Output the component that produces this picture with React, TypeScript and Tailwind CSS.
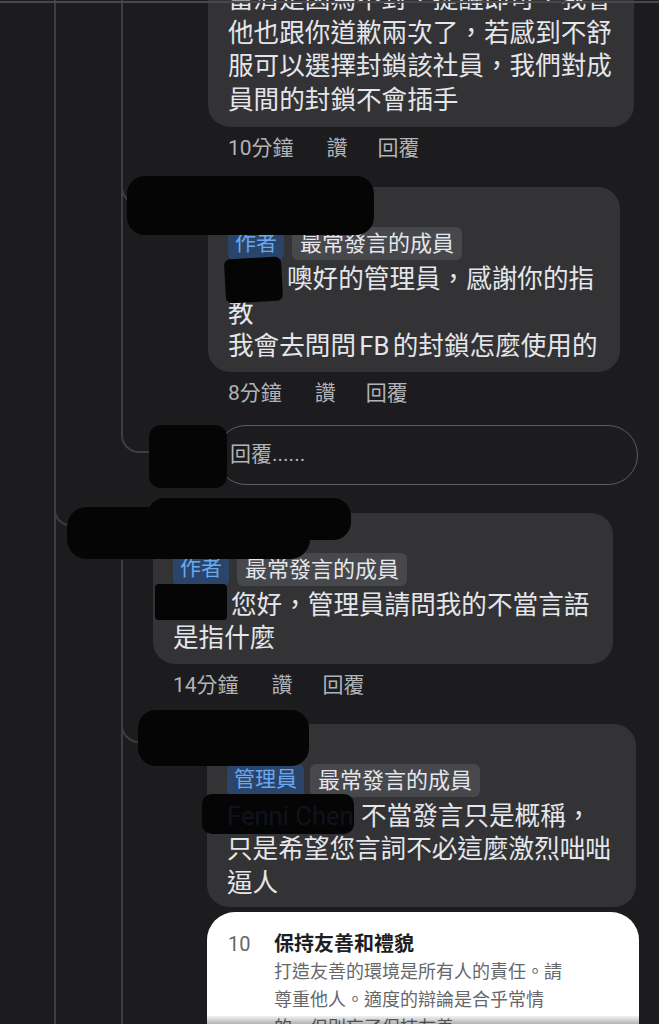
import React from 'react';

const line = 'absolute w-[2px] bg-[#3d3e41]';
const curve = 'absolute border-b-2 border-l-2 border-[#3d3e41]';
const blob = 'absolute bg-[#050505]';

const Meta = ({ time, className }: { time: string; className: string }) => (
    <div className={`flex h-[24px] items-center gap-[30px] text-[21px] leading-[24px] text-[#b0b3b8] ${className}`}>
        <span className="pr-[3px]">{time}</span>
        <span>讚</span>
        <span>回覆</span>
    </div>
);

const Badges = ({ role, gap }: { role: string; gap: string }) => (
    <div className={`flex h-[33px] items-stretch ${gap}`}>
        <span className="flex items-center rounded-[6px] bg-[#2a4569] px-[7px] text-[21px] text-[#6aa8f0]">{role}</span>
        <span className="flex items-center rounded-[6px] bg-[#47484b] px-[8px] text-[22px] text-[#e4e6eb]">最常發言的成員</span>
    </div>
);

export default function App() {
    return (
        <div className="relative h-[1024px] w-[659px] overflow-hidden bg-[#1c1c1e] font-[Roboto,'Noto_Sans_CJK_TC',sans-serif] text-[#e4e6eb]">
            {/* thread lines */}
            <div className={`${line} left-[54px] top-0 h-full`} />
            <div className={`${curve} left-[54px] top-[488px] h-[38px] w-[20px] rounded-bl-[16px]`} />
            <div className={`${line} left-[121px] top-0 h-[420px]`} />
            <div className={`${curve} left-[121px] top-[165px] h-[40px] w-[22px] rounded-bl-[18px]`} />
            <div className={`${curve} left-[121px] top-[410px] h-[43px] w-[30px] rounded-bl-[18px]`} />
            <div className={`${line} left-[121px] top-[560px] bottom-0`} />
            <div className={`${curve} left-[121px] top-[705px] h-[38px] w-[26px] rounded-bl-[18px]`} />

            <div className="absolute left-0 top-[1px] h-[2px] w-full bg-[#48484a]" />

            <div className="flex flex-col">
                {/* comment 1 */}
                <div className="ml-[208px] mt-[-29px] w-[426px] rounded-[22px] bg-[#333335] px-5 pb-[10px] pt-[12px] text-[25.6px] leading-[33.5px]">
                    <div className="whitespace-nowrap">當清是因為不對，提醒即可，我會</div>
                    <div className="whitespace-nowrap">他也跟你道歉兩次了，若感到不舒</div>
                    <div className="whitespace-nowrap">服可以選擇封鎖該社員，我們對成</div>
                    <div className="whitespace-nowrap">員間的封鎖不會插手</div>
                </div>
                <Meta time="10分鐘" className="ml-[228px] mt-[9px]" />

                {/* comment 2 */}
                <div className="relative mt-[27px]">
                    <div className="ml-[208px] w-[412px] rounded-[22px] bg-[#333335] px-5 pb-[8px] pt-[12px]">
                        <div className="h-[28px] text-[22px] font-semibold leading-[28px]">Fenni Chen</div>
                        <Badges role="作者" gap="gap-[8px]" />
                        <div className="mt-[3px] text-[25.6px] leading-[33.5px]">
                            <div className="whitespace-nowrap">
                                <span className="relative inline-block h-[33.5px] w-[59px] align-top">
                                    <span className={`${blob} -left-[3px] -top-[5px] h-[44px] w-[57px] -rotate-3 rounded-[6px]`} />
                                </span>
                                噢好的管理員，感謝你的指
                            </div>
                            <div>教</div>
                            <div className="whitespace-nowrap [word-spacing:-3px]">我會去問問 FB 的封鎖怎麼使用的</div>
                        </div>
                    </div>
                    <div className={`${blob} left-[127px] -top-[11px] h-[59px] w-[247px] rounded-[18px]`} />
                </div>
                <Meta time="8分鐘" className="ml-[228px] mt-[9px]" />

                {/* reply box */}
                <div className="relative mt-[20px]">
                    <div className="ml-[216px] flex h-[60px] w-[422px] items-center rounded-full border-[1.5px] border-[#5c5d60] pl-[13px] text-[21px] text-[#b0b3b8]">
                        回覆......
                    </div>
                    <div className={`${blob} left-[149px] top-0 h-[63px] w-[78px] rounded-[12px]`} />
                </div>

                {/* comment 3 */}
                <div className="relative mt-[28px]">
                    <div className="ml-[153px] w-[460px] rounded-[22px] bg-[#333335] px-5 pb-[8px] pt-[12px]">
                        <div className="h-[28px] text-[22px] font-semibold leading-[28px]">Fenni Chen</div>
                        <Badges role="作者" gap="gap-[8px]" />
                        <div className="mt-[3px] text-[25.6px] leading-[33.5px]">
                            <div className="whitespace-nowrap">
                                <span className="relative inline-block h-[33.5px] w-[58px] align-top">
                                    <span className={`${blob} -left-[18px] -top-[5px] h-[36px] w-[72px] rounded-[4px]`} />
                                </span>
                                您好，管理員請問我的不當言語
                            </div>
                            <div>是指什麼</div>
                        </div>
                    </div>
                    <div className={`${blob} left-[147px] -top-[15px] h-[42px] w-[204px] rounded-[18px]`} />
                    <div className={`${blob} left-[67px] -top-[6px] h-[52px] w-[243px] rounded-[20px]`} />
                </div>
                <Meta time="14分鐘" className="ml-[173px] mt-[9px]" />

                {/* comment 4 */}
                <div className="relative mt-[27px]">
                    <div className="ml-[207px] w-[429px] rounded-[22px] bg-[#333335] px-5 pb-[7px] pt-[12px]">
                        <div className="h-[28px] text-[22px] font-semibold leading-[28px]">管理員</div>
                        <Badges role="管理員" gap="gap-[6px]" />
                        <div className="mt-[3px] text-[25.6px] leading-[33.5px]">
                            <div className="whitespace-nowrap">
                                <span className="relative inline-block h-[33.5px] w-[134px] align-top">
                                    <span className={`${blob} -left-[25px] -top-[6px] h-[40px] w-[152px] rounded-[10px]`} />
                                    <span className="relative text-[#0f131c]">Fenni Chen</span>
                                </span>
                                不當發言只是概稱，
                            </div>
                            <div className="whitespace-nowrap">只是希望您言詞不必這麼激烈咄咄</div>
                            <div>逼人</div>
                        </div>
                    </div>
                    <div className={`${blob} left-[138px] -top-[14px] h-[56px] w-[171px] rounded-[18px]`} />
                </div>

                {/* rules sheet */}
                <div className="ml-[207px] mt-[5px] flex h-[200px] w-[432px] rounded-t-[28px] bg-white pl-[21px] pt-[18px]">
                    <div className="w-[46px] text-[20px] leading-[28px] text-[#65676b]">10</div>
                    <div>
                        <div className="text-[20px] font-bold leading-[28px] text-[#1c1e21]">保持友善和禮貌</div>
                        <div className="text-[18px] leading-[28px] text-[#65676b]">
                            <div>打造友善的環境是所有人的責任。請</div>
                            <div>尊重他人。適度的辯論是合乎常情</div>
                            <div>的，但別忘了保持友善。</div>
                        </div>
                    </div>
                </div>
            </div>

            <div className="absolute bottom-0 left-[207px] h-[8px] w-[432px] bg-gradient-to-b from-black/5 to-black/30" />
        </div>
    );
}
